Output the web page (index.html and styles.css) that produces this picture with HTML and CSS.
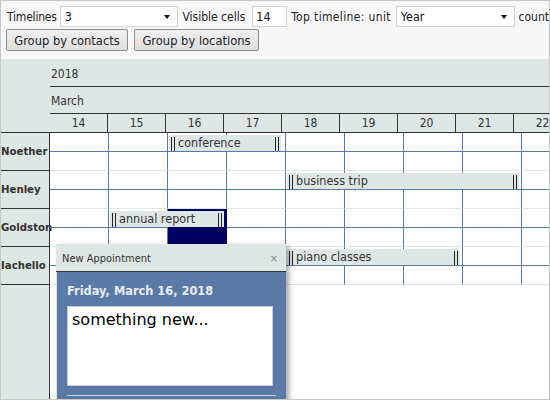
FILE: index.html
```html
<!DOCTYPE html>
<html>
<head>
<meta charset="utf-8">
<link rel="stylesheet" href="styles.css">
</head>
<body>
<div class="app">
  <div class="toolbar">
    <div class="tool-row">
      <span class="lbl first">Timelines</span>
      <div class="select w119 s1"><span>3</span><span class="arrow"></span></div>
      <span class="lbl">Visible cells</span>
      <div class="input"><span>14</span></div>
      <span class="lbl wide">Top timeline: unit</span>
      <div class="select w119"><span>Year</span><span class="arrow"></span></div>
      <span class="lbl">count</span>
    </div>
    <div class="tool-row buttons">
      <button class="btn b1">Group by contacts</button>
      <button class="btn b2">Group by locations</button>
    </div>
  </div>

  <div class="head">
    <div class="head-corner"></div>
    <div class="timelines">
      <div class="year-row">2018</div>
      <div class="month-row">March</div>
      <div class="day-row">
        <div class="day">14</div><div class="day">15</div><div class="day">16</div><div class="day">17</div>
        <div class="day">18</div><div class="day">19</div><div class="day">20</div><div class="day">21</div>
        <div class="day">22</div>
      </div>
    </div>
  </div>

  <div class="body">
    <div class="resources">
      <div class="res">Noether</div>
      <div class="res">Henley</div>
      <div class="res">Goldston</div>
      <div class="res">Iachello</div>
    </div>
    <div class="grid">
      <div class="lane">
        <div class="cell"></div><div class="cell"></div><div class="cell"></div><div class="cell"></div><div class="cell"></div><div class="cell"></div><div class="cell"></div><div class="cell"></div><div class="cell"></div>
        <div class="event" style="left:119px;width:112px"><span class="grip"></span><span class="title">conference</span><span class="grip end"></span></div>
      </div>
      <div class="lane">
        <div class="cell"></div><div class="cell"></div><div class="cell"></div><div class="cell"></div><div class="cell"></div><div class="cell"></div><div class="cell"></div><div class="cell"></div><div class="cell"></div>
        <div class="event" style="left:237px;width:232px"><span class="grip"></span><span class="title">business trip</span><span class="grip end"></span></div>
      </div>
      <div class="lane">
        <div class="cell"></div><div class="cell"></div><div class="cell selected"></div><div class="cell"></div><div class="cell"></div><div class="cell"></div><div class="cell"></div><div class="cell"></div><div class="cell"></div>
        <div class="event" style="left:60px;width:114px"><span class="grip"></span><span class="title">annual report</span><span class="grip end"></span></div>
      </div>
      <div class="lane">
        <div class="cell"></div><div class="cell"></div><div class="cell"></div><div class="cell"></div><div class="cell"></div><div class="cell"></div><div class="cell"></div><div class="cell"></div><div class="cell"></div>
        <div class="event" style="left:237px;width:173px"><span class="grip"></span><span class="title">piano classes</span><span class="grip end"></span></div>
      </div>
    </div>
  </div>

  <div class="dialog">
    <div class="dlg-head"><span>New Appointment</span><span class="close">×</span></div>
    <div class="dlg-body">
      <div class="dlg-date">Friday, March 16, 2018</div>
      <textarea class="dlg-text" readonly>something new...</textarea>
      <div class="dlg-sep"></div>
    </div>
  </div>
</div>
</body>
</html>
```
FILE: styles.css
```css
* { box-sizing: border-box; margin: 0; padding: 0; }
html, body { margin: 0; background: #fff; }
body {
  font-family: "DejaVu Sans Condensed", "DejaVu Sans", sans-serif;
  color: #333;
}
.app {
  width: 550px;
  height: 400px;
  border: 1px solid #c8c8c8;
  overflow: hidden;
  position: relative;
  display: flex;
  flex-direction: column;
  background: #fff;
}

/* toolbar */
.toolbar {
  flex: none;
  height: 58px;
  background: #f8f8f8;
  padding: 5px 0 0 5px;
  display: flex;
  flex-direction: column;
  gap: 2px;
}
.tool-row {
  display: flex;
  align-items: center;
  gap: 4px;
  height: 21px;
  font-size: 12px;
  white-space: nowrap;
  color: #222;
}
.lbl.first { margin-left: 1px; letter-spacing: -0.2px; }
.lbl.wide { letter-spacing: 0.35px; margin-right: 1px; }
.select, .input {
  height: 21px;
  background: #fff;
  border: 1px solid #d4d4d4;
  display: flex;
  align-items: center;
  padding-left: 4px;
  font-size: 12.5px;
  color: #111;
}
.select { justify-content: space-between; padding-right: 7px; }
.s1 { margin-left: -1px; }
.w119 { width: 119px; }
.input { width: 35px; padding-left: 3px; margin-left: 3px; }
.arrow {
  width: 0; height: 0;
  border-left: 3.5px solid transparent;
  border-right: 3.5px solid transparent;
  border-top: 4px solid #111;
}
.buttons { height: 22px; gap: 6px; }
.btn {
  height: 22px;
  border: 1px solid #8c8c8c;
  border-radius: 2px;
  background: linear-gradient(#f0f0f0, #dedede);
  font-family: inherit;
  font-size: 12.8px;
  color: #222;
  padding: 0;
}
.b1 { width: 122px; }
.b2 { width: 125px; }

/* header */
.head {
  flex: none;
  display: flex;
  height: 74px;
  background: #dfe6e6;
  border-bottom: 1px solid #333;
}
.head-corner { width: 49px; flex: none; }
.timelines { flex: 1; display: flex; flex-direction: column; font-size: 12px; }
.year-row {
  height: 28px;
  border-bottom: 1px solid #333;
  padding: 7px 0 0 1px;
  line-height: 16px;
}
.month-row {
  height: 27px;
  border-bottom: 1px solid #333;
  padding: 6px 0 0 1px;
  line-height: 16px;
}
.day-row { height: 18px; display: flex; }
.day {
  flex: none;
  width: 58px;
  border-right: 1px solid #333;
  text-align: center;
  line-height: 18px;
}

/* body */
.body { flex: 1; display: flex; min-height: 0; }
.resources {
  flex: none;
  width: 49px;
  background: #dfe6e6;
  border-right: 1px solid #333;
}
.res {
  height: 38px;
  border-bottom: 1px solid #333;
  display: flex;
  align-items: center;
  padding-bottom: 1px;
  font-weight: bold;
  font-size: 11.3px;
  white-space: nowrap;
  color: #333;
}
.grid { flex: 1; overflow: hidden; display: flex; flex-direction: column; }
.lane { position: relative; display: flex; height: 38px; flex: none; }
.cell {
  flex: none;
  width: 59px;
  height: 38px;
  border-right: 1px solid #5b79a6;
  border-bottom: 1px solid #dfe6e6;
  background: linear-gradient(transparent 18px, #5b79a6 18px, #5b79a6 19px, transparent 19px);
}
.cell.selected { background: #000060; border-right-color: #000060; }
.event {
  position: absolute;
  top: 2px;
  height: 16px;
  background: #dfe6e6;
  display: flex;
  align-items: flex-end;
  font-size: 12.5px;
  color: #333;
  white-space: nowrap;
  overflow: hidden;
}
.grip {
  flex: none;
  width: 4px;
  height: 14px;
  margin: 0 3px 0 2px;
  border-left: 1px solid #222;
  border-right: 1px solid #222;
}
.grip.end { margin: 0 2px 0 auto; }
.title { line-height: 17px; }

/* dialog */
.dialog {
  position: absolute;
  left: 55px;
  top: 243px;
  width: 230px;
  height: 200px;
  box-shadow: 3px 2px 5px rgba(0, 0, 0, 0.35);
  display: flex;
  flex-direction: column;
}
.dlg-head {
  flex: none;
  height: 28px;
  background: #dfe6e6;
  border-bottom: 1px solid #333;
  display: flex;
  align-items: center;
  justify-content: space-between;
  padding: 1px 8px 0 6px;
  font-size: 11px;
  color: #333;
}
.close { color: #888; font-size: 11px; }
.dlg-body {
  flex: 1;
  background: #5b79a6;
  border-left: 1px solid #dfe6e6;
  padding: 12px 10px 0 10px;
}
.dlg-date {
  font-family: "DejaVu Sans", sans-serif;
  font-weight: bold;
  font-size: 11.4px;
  line-height: 14px;
  color: #e8eef4;
}
.dlg-text {
  display: block;
  margin-top: 8px;
  width: 206px;
  height: 80px;
  border: 1px solid #c8d0da;
  background: #fff;
  resize: none;
  overflow: hidden;
  padding: 3px 4px;
  font-family: "DejaVu Sans", sans-serif;
  font-size: 16px;
  line-height: 20px;
  color: #000;
  outline: none;
}
.dlg-sep {
  margin-top: 9px;
  width: 209px;
  height: 1px;
  background: #c5d1df;
}
```
